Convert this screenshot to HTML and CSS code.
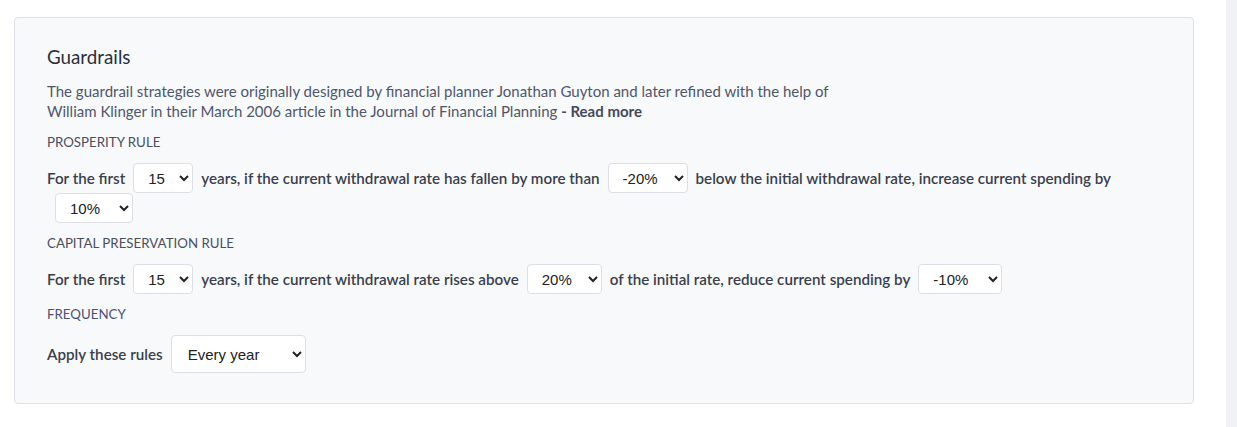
FILE: index.html
```html
<!DOCTYPE html>
<html lang="en">
<head>
<meta charset="utf-8">
<title>Guardrails</title>
<link rel="stylesheet" href="styles.css">
</head>
<body>
<div class="page">
  <main class="main">
    <section class="card">
      <h2 class="title">Guardrails</h2>
      <p class="desc">The guardrail strategies were originally designed by financial planner Jonathan Guyton and later refined with the help of William Klinger in their March 2006 article in the Journal of Financial Planning <strong>- Read more</strong></p>

      <div class="label">PROSPERITY RULE</div>
      <p class="rule">For the first<select class="sel w60"><option>5</option><option>10</option><option selected>15</option><option>20</option></select>years, if the current withdrawal rate has fallen by more than<select class="sel w79"><option>-10%</option><option selected>-20%</option><option>-30%</option></select>below the initial withdrawal rate, increase current spending by<select class="sel w78"><option>5%</option><option selected>10%</option><option>15%</option></select></p>

      <div class="label">CAPITAL PRESERVATION RULE</div>
      <p class="rule">For the first<select class="sel w60"><option>5</option><option>10</option><option selected>15</option><option>20</option></select>years, if the current withdrawal rate rises above<select class="sel w74"><option>10%</option><option selected>20%</option><option>30%</option></select>of the initial rate, reduce current spending by<select class="sel w83"><option>-5%</option><option selected>-10%</option><option>-15%</option></select></p>

      <div class="label freq">FREQUENCY</div>
      <p class="rule apply">Apply these rules<select class="sel big"><option selected>Every year</option><option>Every 2 years</option></select></p>
    </section>
  </main>
  <aside class="side"></aside>
</div>
</body>
</html>
```
FILE: styles.css
```css
* { box-sizing: border-box; }
html, body { margin: 0; padding: 0; background: #ffffff; }
body { font-family: Lato, "Noto Sans", sans-serif; color: #3a3f4b; }

.page { display: flex; min-height: 427px; }
.main { flex: 1; padding: 17px 32px 0 14px; }
.side { width: 11px; background: #f1f2f6; }

.card {
  background: #f8f9fb;
  border: 1px solid #dde0e6;
  border-radius: 4px;
  padding: 27px 32px 30px;
}

.title {
  margin: 0;
  font-size: 18.8px;
  line-height: 24px;
  font-weight: 400;
  color: #2b2f39;
}

.desc {
  margin: 12px 0 0;
  max-width: 790px;
  font-size: 15px;
  line-height: 20px;
  color: #50566a;
}
.desc strong { font-weight: 700; color: #454a57; }

.label {
  margin-top: 10px;
  font-size: 13.3px;
  line-height: 20px;
  color: #4a4f5e;
}
.label:first-of-type { margin-top: 11px; }
.label.freq { color: #4b5276; }

.rule {
  margin: 11px 0 0;
  font-size: 15.2px;
  line-height: 30px;
  font-weight: 600;
  color: #3a3f4b;
}

.sel {
  font-family: "Liberation Sans", Arial, sans-serif;
  font-size: 15px;
  font-weight: 400;
  color: #222;
  background: #ffffff;
  border: 1px solid #dcdfe6;
  border-radius: 4px;
  height: 30px;
  padding: 0 6px 0 10px;
  margin: 0 8px;
  vertical-align: top;
}
.w60 { width: 60px; }
.w74 { width: 75px; }
.w78 { width: 78px; }
.w79 { width: 80px; }
.w83 { width: 84px; }
.big { width: 135px; height: 38px; padding-left: 12px; }

.apply { line-height: 38px; }
```
